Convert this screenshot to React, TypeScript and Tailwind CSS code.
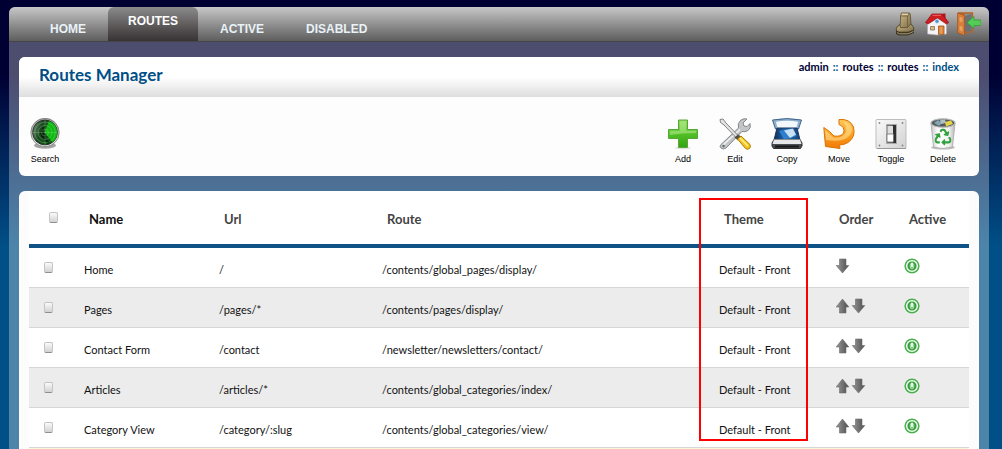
import type { ReactNode } from "react";
import { FaRecycle } from "react-icons/fa";

const bodyFont = "font-['Trebuchet_MS',Lato,sans-serif]";

function StampIcon() {
  return (
    <svg width="24" height="24" viewBox="0 0 24 24" aria-hidden="true">
      <defs>
        <linearGradient id="stampFill" x1="0" y1="0" x2="1" y2="1">
          <stop offset="0" stopColor="#cbb98c" />
          <stop offset="1" stopColor="#7d6d45" />
        </linearGradient>
      </defs>
      <path d="M3 16 L7 12 H18 L21 16 V21 L15 23.500 H6 L3 22 Z" fill="#3d3523" />
      <path d="M3.300 16 L7.500 12 H18 L20.700 15.500 V18 L15 20 H6 L3.300 18.500 Z" fill="url(#stampFill)" stroke="#4b4027" strokeWidth=".7" />
      <path d="M8.500 1 H16 Q17 1 17.200 2 L18 12 L14.500 15.500 H7.500 L7 13 Q8 8 7.500 4 Z" fill="url(#stampFill)" stroke="#5a4c2c" strokeWidth=".8" />
      <path d="M8 4 H14.500 L16.800 1.800 M14.500 4 V15" stroke="#6d5c35" strokeWidth=".8" fill="none" />
      <path d="M8.800 2.300 H15" stroke="#e2d4ac" strokeWidth="1.200" />
      <path d="M4 20.500 L6.500 21.800 H15 L20.500 19.500" stroke="#a99a6e" fill="none" />
    </svg>
  );
}

function HouseIcon() {
  return (
    <svg width="24" height="24" viewBox="0 0 24 24" aria-hidden="true">
      <path d="M17.500 1.500 h3 v6 h-3z" fill="#b01818" />
      <path d="M2.500 10 L12 3 L21.500 10 V22 L12 23 L2.500 22 Z" fill="#f4f4f6" stroke="#a8a8ad" strokeWidth=".6" />
      <path d="M.5 10.500 L7 2 H17 L23.700 10.500 L21.500 12 L12.500 6 L3 12 Z" fill="#cf1d22" stroke="#8f0d12" strokeWidth=".7" />
      <path d="M7.500 3.300 H16" stroke="#ed6a6a" />
      <circle cx="12" cy="9.300" r="2" fill="#4b9bd0" stroke="#c9dce8" strokeWidth=".6" />
      <path d="M5.500 14.500 h4 v3.500 h-4z" fill="#d9b98f" stroke="#8b6f52" strokeWidth=".8" />
      <path d="M13.500 14 h5.500 v8.300 h-5.500z" fill="#e08a3e" stroke="#9c5220" strokeWidth=".8" />
      <path d="M16.200 15 v7" stroke="#f5b57c" strokeWidth=".7" />
    </svg>
  );
}

function ExitIcon() {
  return (
    <svg width="24" height="24" viewBox="0 0 24 24" aria-hidden="true">
      <path d="M1 1 H15.500 V20 H7 V3 Z" fill="#8a8c8e" stroke="#b86220" strokeWidth="1.300" />
      <path d="M8 4 L14.500 2 V19.500 H8Z" fill="#6e7174" />
      <path d="M.6 1 L7.500 3.500 V23.500 L.6 20.500 Z" fill="#dc813a" stroke="#a7541a" strokeWidth=".8" />
      <path d="M2 4 L6 5.500 V11 L2 10 Z M2 13 L6 14 V20.500 L2 18.500Z" fill="#ec9f5c" stroke="#b96826" strokeWidth=".5" />
      <path d="M10 10.500 L17 4.500 V8 H24 V13.500 H17 V16.500 Z" fill="#53cd56" stroke="#2e9e35" strokeWidth=".8" />
    </svg>
  );
}

function RadarIcon() {
  return (
    <svg width="32" height="32" viewBox="0 0 32 32" aria-hidden="true">
      <defs>
        <linearGradient id="radarFill" x1="0" y1="0" x2="1" y2=".3">
          <stop offset="0" stopColor="#7a937c" />
          <stop offset=".4" stopColor="#1a4a20" />
          <stop offset="1" stopColor="#0a5a12" />
        </linearGradient>
        <linearGradient id="radarRim" x1="0" y1="0" x2="0" y2="1">
          <stop offset="0" stopColor="#9a9d9a" />
          <stop offset="1" stopColor="#e9ebe9" />
        </linearGradient>
      </defs>
      <ellipse cx="16" cy="27.500" rx="11" ry="3.200" fill="#000" opacity=".35" />
      <circle cx="16" cy="14.500" r="14.200" fill="url(#radarRim)" stroke="#6a6d6a" strokeWidth=".7" />
      <circle cx="16" cy="14.500" r="12.400" fill="url(#radarFill)" stroke="#222" strokeWidth=".8" />
      <path d="M15.500 14.500 L20 3 A12.200 12.200 0 0 1 23.500 24.200 Z" fill="#10c510" opacity=".9" />
      <path d="M14 9 L17 8 L14 13 L18 18 L16 20 L21 24 L19 26 L13 20 L11 15Z" fill="#021504" opacity=".75" />
      <g fill="none" stroke="#a8e0a8" strokeWidth=".6" opacity=".5">
        <circle cx="16" cy="14.500" r="3.500" />
        <circle cx="16" cy="14.500" r="7" />
        <circle cx="16" cy="14.500" r="10.300" />
        <path d="M3.500 14.500 H28.500 M16 2 V27" />
      </g>
    </svg>
  );
}

function AddIcon() {
  return (
    <svg width="32" height="32" viewBox="0 0 32 32" aria-hidden="true">
      <defs>
        <linearGradient id="addFill" x1="0" y1="0" x2="0" y2="1">
          <stop offset="0" stopColor="#8fdb5c" />
          <stop offset=".5" stopColor="#53c025" />
          <stop offset="1" stopColor="#32a315" />
        </linearGradient>
      </defs>
      <ellipse cx="16" cy="30" rx="8" ry="1.500" fill="#000" opacity=".1" />
      <path d="M11.500 2 H20.500 V11.500 H30.500 V20.500 H20.500 V29.500 H11.500 V20.500 H1.500 V11.500 H11.500 Z" fill="url(#addFill)" stroke="#58a838" strokeLinejoin="round" />
      <path d="M12.800 3.300 H19.200 V12.800 H29.200 V15 Q15 15 2.800 17 V12.800 H12.800 Z" fill="#c8f3a8" opacity=".45" />
    </svg>
  );
}

function EditIcon() {
  return (
    <svg width="32" height="32" viewBox="0 0 32 32" aria-hidden="true">
      <path d="M2 26.500 L19.500 10 Q18 5 22 2 Q25 0 28 1 L24 5 L25 8 L28 8.500 L31 5.500 Q32.500 10 29 12.500 Q26 14.500 23 13.500 L7 30 Q4 32 2 30 Q0 28.500 2 26.500Z" fill="#c3c5c7" stroke="#85888a" />
      <path d="M4 27 L21 11.500" stroke="#f5f5f5" strokeWidth="1.300" />
      <circle cx="4.500" cy="28" r="1.200" fill="#626568" />
      <path d="M1 1.500 L4 1 L7 5 L19 17.500 L17 19.500 L5 7 L1.500 4.500 Z" fill="#e0e2e3" stroke="#777" strokeWidth=".9" />
      <path d="M15.500 19.500 L19 16.500 L22 18.500 L19 22.500 Z" fill="#504d45" />
      <path d="M18.500 21 L22 18 L31 26.500 Q32 29 30.500 30.500 Q28.500 32 26.500 30.500 Z" fill="#f4c51d" stroke="#aa7c07" />
      <path d="M21 20 L29 28" stroke="#fff19a" strokeWidth="1.200" />
    </svg>
  );
}

function CopyIcon() {
  return (
    <svg width="32" height="32" viewBox="0 0 32 32" aria-hidden="true">
      <defs>
        <linearGradient id="glassFill" x1="0" y1="0" x2="1" y2="0">
          <stop offset="0" stopColor="#0d2f5c" />
          <stop offset=".5" stopColor="#2471ba" />
          <stop offset="1" stopColor="#123f78" />
        </linearGradient>
      </defs>
      <path d="M1.500 2 Q16 -.8 30.500 2 L27.500 11 H4.500 Z" fill="#8fb0cd" stroke="#3f648a" />
      <path d="M5 3.800 Q16 1.800 27 3.800 L25.500 10.500 H6.500 Z" fill="#f2f8fc" />
      <path d="M6 10 H26 L29 22 H3 Z" fill="url(#glassFill)" stroke="#1b355a" />
      <path d="M8 13 L20 10.500 L26 18 L13 21.500 Z" fill="#2e80cf" />
      <path d="M13 12.500 L22 10.500 L25 16.500 L19 20Z" fill="#e4f1fc" opacity=".85" />
      <path d="M3 21.500 H29 L31 25 V28 L29.500 30.500 H2.500 L1 28 V25 Z" fill="#4b4e51" stroke="#2d3032" />
      <path d="M3 21.500 H29 L30.500 26 H1.500 Z" fill="#e6e7e8" />
      <path d="M4 28.500 H28" stroke="#161616" strokeWidth="1.800" />
    </svg>
  );
}

function MoveIcon() {
  return (
    <svg width="32" height="32" viewBox="0 0 32 32" aria-hidden="true">
      <defs>
        <linearGradient id="moveFill" x1="0" y1="0" x2="0" y2="1">
          <stop offset="0" stopColor="#ffc75a" />
          <stop offset=".55" stopColor="#fb9d1e" />
          <stop offset="1" stopColor="#ef7a08" />
        </linearGradient>
      </defs>
      <path d="M16 1.500 Q27 .5 30.500 9 Q33 19 25 24.500 Q21 27 16.500 27 L17 30.500 L2.500 28.500 L.8 9.500 L6.500 13.500 L11 18 Q18 19 20.500 15 Q22.500 9 16 6.500 Z" fill="url(#moveFill)" stroke="#d97504" strokeLinejoin="round" />
      <path d="M2.200 12 L6.500 16 L10.500 19.500 Q20 20.500 23 14 Q24 7 20 3.500 Q27 4 29 11 Q29 17 22 21 Q15 24 3 22 Z" fill="#ffe59b" opacity=".55" />
    </svg>
  );
}

function ToggleIcon() {
  return (
    <svg width="32" height="32" viewBox="0 0 32 32" aria-hidden="true">
      <defs>
        <linearGradient id="plateFill" x1="0" y1="0" x2="1" y2="1">
          <stop offset="0" stopColor="#fafafa" />
          <stop offset="1" stopColor="#d2d2d2" />
        </linearGradient>
      </defs>
      <rect x="1" y="1.500" width="30" height="29" rx="1" fill="url(#plateFill)" stroke="#bdbdbd" />
      <path d="M2 30.500 H31" stroke="#999" />
      <g fill="#858585">
        <circle cx="4.500" cy="5" r=".9" />
        <circle cx="27.500" cy="5" r=".9" />
        <circle cx="4.500" cy="27.500" r=".9" />
        <circle cx="27.500" cy="27.500" r=".9" />
      </g>
      <path d="M11.500 6.500 H21.500 V25.500 H11.500 Z" fill="#6e6e6e" stroke="#a9a9a9" />
      <path d="M17.500 7 H21 V25 H17.500 Z" fill="#2f2f2f" />
      <path d="M12.500 8 H18 V16 H12.500 Z" fill="#dedede" />
      <path d="M12 16 H18.500 V24 H12 Z" fill="#fff" stroke="#6c6c6c" strokeWidth=".8" />
    </svg>
  );
}

function DeleteIcon() {
  return (
    <svg width="32" height="32" viewBox="0 0 32 32" aria-hidden="true">
      <defs>
        <linearGradient id="binFill" x1="0" y1="0" x2="1" y2="0">
          <stop offset="0" stopColor="#c8c8c8" />
          <stop offset=".3" stopColor="#fff" />
          <stop offset=".75" stopColor="#f0f0f0" />
          <stop offset="1" stopColor="#b8b8b8" />
        </linearGradient>
      </defs>
      <ellipse cx="16" cy="29.500" rx="12" ry="2" fill="#000" opacity=".25" />
      <path d="M4 5 L6.500 29 Q16 32 25.500 29 L28 5 Z" fill="url(#binFill)" stroke="#a5a5a5" strokeWidth=".8" />
      <ellipse cx="16" cy="5" rx="12" ry="4.200" fill="#53585b" stroke="#b5b8b9" strokeWidth="1.200" />
      <path d="M7 5 L11 2 L15 5 L12 8 Z" fill="#87a4b5" />
      <path d="M13 1.800 L18 1.500 L19 5 L14 6Z" fill="#aebfc8" />
      <path d="M18 4 L24 2.500 L26 6 L19 8.500 Z" fill="#e5d447" />
      <FaRecycle x="7.500" y="10.500" width="17" height="17" size={17} color="#31a13c" />
    </svg>
  );
}

function ArrowIcon({ up = false }: { up?: boolean }) {
  return (
    <svg width="16" height="16" viewBox="0 0 16 16" aria-hidden="true" className="block">
      <defs>
        <linearGradient id="arrowFill" x1="0" y1="0" x2="1" y2="0">
          <stop offset="0" stopColor="#979797" />
          <stop offset=".5" stopColor="#737373" />
          <stop offset="1" stopColor="#4c4c4c" />
        </linearGradient>
      </defs>
      <path
        d={up ? "M8.500 1 L14.800 9 H12 V15 H5.500 V9 H2.200 Z" : "M8.500 15 L14.800 7.500 H12 V1 H5.500 V7.500 H2.200 Z"}
        fill="url(#arrowFill)"
        stroke="#6b6b6b"
        strokeWidth=".6"
      />
    </svg>
  );
}

function PowerIcon() {
  return (
    <svg width="16" height="16" viewBox="0 0 16 16" aria-hidden="true" className="block">
      <circle cx="8" cy="8" r="7.600" fill="#4db04f" />
      <circle cx="8" cy="8" r="5.300" fill="#2f9c35" stroke="#f2fbf2" strokeWidth="1.500" />
      <ellipse cx="8" cy="8" rx="2" ry="2.900" fill="#6cc46e" stroke="#d8f2d8" strokeWidth=".7" />
      <path d="M8 4.800 V9" stroke="#fff" strokeWidth="1.600" />
    </svg>
  );
}

const tabs = ["HOME", "ROUTES", "ACTIVE", "DISABLED"];

const tools: { label: string; icon: ReactNode }[] = [
  { label: "Add", icon: <AddIcon /> },
  { label: "Edit", icon: <EditIcon /> },
  { label: "Copy", icon: <CopyIcon /> },
  { label: "Move", icon: <MoveIcon /> },
  { label: "Toggle", icon: <ToggleIcon /> },
  { label: "Delete", icon: <DeleteIcon /> },
];

const routes = [
  { name: "Home", url: "/", route: "/contents/global_pages/display/" },
  { name: "Pages", url: "/pages/*", route: "/contents/pages/display/" },
  { name: "Contact Form", url: "/contact", route: "/newsletter/newsletters/contact/" },
  { name: "Articles", url: "/articles/*", route: "/contents/global_categories/index/" },
  { name: "Category View", url: "/category/:slug", route: "/contents/global_categories/view/" },
];

function ToolButton({ label, icon }: { label: string; icon: ReactNode }) {
  return (
    <button type="button" className="flex w-8 flex-col items-center gap-[3px] font-['Liberation_Sans',sans-serif] text-[9px] leading-3 text-black">
      {icon}
      {label}
    </button>
  );
}

function Check({ label }: { label: string }) {
  return (
    <input
      type="checkbox"
      aria-label={label}
      className="block h-[11px] w-[9px] appearance-none rounded-xs border border-[#c4c4c4] border-b-[#8e8e8e] bg-linear-to-b from-[#fafafa] to-[#d2d2d2] checked:from-[#0f5285] checked:to-[#0f5285]"
    />
  );
}

export default function App() {
  return (
    <div className={`min-h-screen bg-[#004f86] bg-[linear-gradient(#000033_0px,#000033_75px,#004f86_245px)] pt-[7px] ${bodyFont}`}>
      <div className="mr-[13px] ml-[9px] rounded-t-md bg-white/30">
        <header className="flex h-[35px] items-center justify-between rounded-t-md border-b border-[#454545] bg-linear-to-b from-[#c8c8c8] to-[#5e5e5e] pr-2 pl-[21px]">
          <nav className="flex h-full gap-0.5 font-['Liberation_Sans',sans-serif] text-xs font-bold">
            {tabs.map((tab) => (
              <a
                key={tab}
                href="#"
                aria-current={tab === "ROUTES" ? "page" : undefined}
                className={
                  tab === "ROUTES"
                    ? "rounded-t-md bg-linear-to-b from-[#8c8c8c] to-[#383334] px-5 pt-1.5 text-white"
                    : "px-5 pt-3.5 text-[#e8f2f7]"
                }
              >
                {tab}
              </a>
            ))}
          </nav>
          <div className="flex gap-2">
            <a href="#" aria-label="Stamp"><StampIcon /></a>
            <a href="#" aria-label="Site home"><HouseIcon /></a>
            <a href="#" aria-label="Log out"><ExitIcon /></a>
          </div>
        </header>

        <main className="flex flex-col gap-[15px] px-[10px] pt-[15px]">
          <section className="overflow-hidden rounded-md bg-[#fdfdfd]">
            <div className="flex h-10 items-start justify-between bg-linear-to-b from-white from-50% to-[#dedede] px-5">
              <h1 className="pt-2 text-[17px] leading-5 font-bold text-[#004f86]">Routes Manager</h1>
              <nav aria-label="Breadcrumb" className="flex gap-1 pt-[3px] text-[11px] leading-3.5 font-bold text-[#004f86]">
                <a href="#" className="text-[#000033]">admin</a>
                <span>::</span>
                <a href="#" className="text-[#000033]">routes</a>
                <span>::</span>
                <a href="#" className="text-[#000033]">routes</a>
                <span>::</span>
                <span>index</span>
              </nav>
            </div>
            <div className="flex justify-between pt-[21px] pr-5 pb-[11px] pl-[10px]">
              <ToolButton label="Search" icon={<RadarIcon />} />
              <div className="flex gap-5">
                {tools.map((tool) => (
                  <ToolButton key={tool.label} label={tool.label} icon={tool.icon} />
                ))}
              </div>
            </div>
          </section>

          <section className="relative rounded-t-md bg-[#fcfcfc] px-[10px]">
            <table className="w-full table-fixed border-separate border-spacing-0 bg-white text-left text-[11px] text-[#111]">
              <colgroup>
                <col className="w-[50px]" />
                <col className="w-[135px]" />
                <col className="w-[163px]" />
                <col />
                <col className="w-[115px]" />
                <col className="w-[70px]" />
                <col className="w-[70px]" />
              </colgroup>
              <thead>
                <tr className="h-[57px] text-[13px] text-[#444] *:border-b-4 *:border-[#0f5285] *:px-[10px]">
                  <th><div className="pl-[10px]"><Check label="Select all" /></div></th>
                  <th className="pt-1 text-[#111]">Name</th>
                  <th className="pt-1">Url</th>
                  <th className="pt-1">Route</th>
                  <th className="pt-1">Theme</th>
                  <th className="pt-1">Order</th>
                  <th className="pt-1">Active</th>
                </tr>
              </thead>
              <tbody>
                {routes.map((item, index) => (
                  <tr key={item.name} className="h-10 *:border-b *:border-[#d6d6d6] *:px-[5px] even:bg-[#ececec]">
                    <td><div className="pl-[10px]"><Check label={`Select ${item.name}`} /></div></td>
                    <td className="pt-1.5">{item.name}</td>
                    <td className="pt-1.5">{item.url}</td>
                    <td className="pt-1.5">{item.route}</td>
                    <td className="pt-1.5">Default - Front</td>
                    <td className="pb-1">
                      <div className="flex">
                        {index > 0 && <button type="button" aria-label="Move up"><ArrowIcon up /></button>}
                        <button type="button" aria-label="Move down"><ArrowIcon /></button>
                      </div>
                    </td>
                    <td className="pb-1">
                      <button type="button" aria-label="Toggle active" className="block"><PowerIcon /></button>
                    </td>
                  </tr>
                ))}
              </tbody>
            </table>
            <div className="h-px bg-[#fbf6d3]" />
            <div className="pointer-events-none absolute top-[7px] right-[171px] h-[243px] w-[109px] border-2 border-[#ff0000]" />
          </section>
        </main>
      </div>
    </div>
  );
}
